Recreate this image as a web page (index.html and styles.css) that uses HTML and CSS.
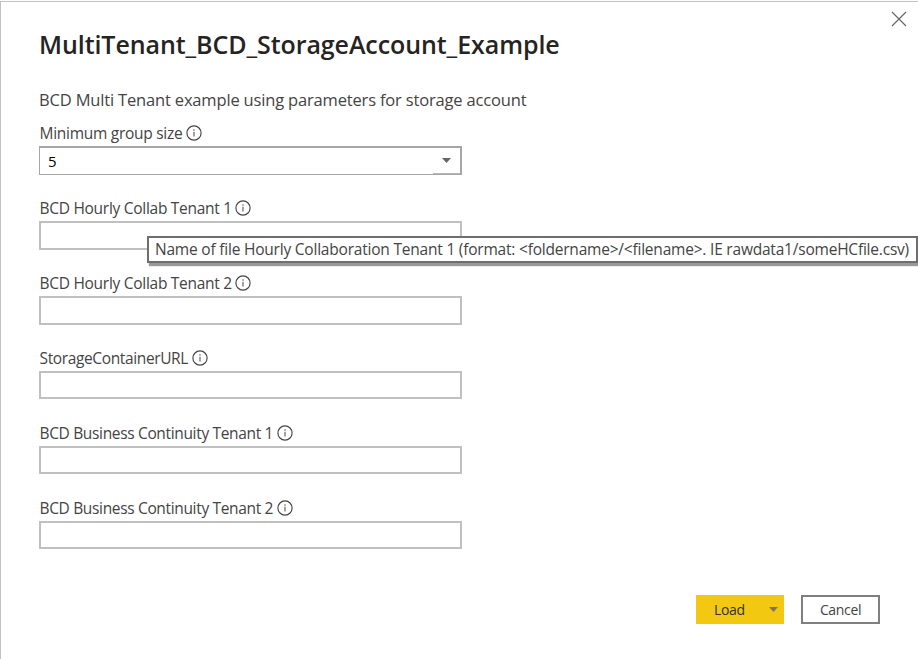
FILE: index.html
```
<!DOCTYPE html>
<html lang="en">
<head>
<meta charset="utf-8">
<title>MultiTenant_BCD_StorageAccount_Example</title>
<link rel="stylesheet" href="styles.css">
</head>
<body>
<svg class="defs" width="0" height="0">
  <symbol id="info" viewBox="0 0 16 16">
    <circle cx="8" cy="8" r="7.1" fill="none" stroke="#444" stroke-width="1.15"/>
    <path d="M8 6.8v4.6M8 4.3v1.4" fill="none" stroke="#666" stroke-width="1.2"/>
  </symbol>
</svg>
<main class="dialog">
  <button class="close" aria-label="Close"><svg width="16" height="16" viewBox="0 0 16 16"><path d="M1 1l14 14M15 1L1 15" stroke="#666" stroke-width="1.2"/></svg></button>
  <h1 class="title">MultiTenant_BCD_StorageAccount_Example</h1>
  <p class="description">BCD Multi Tenant example using parameters for storage account</p>
  <form class="fields">
    <div class="field">
      <div class="label"><span class="t-size">Minimum group size</span><svg class="info"><use href="#info"/></svg></div>
      <div class="control select"><span>5</span><div class="arrow-box"><svg class="arrow" width="9" height="5" viewBox="0 0 9 5"><path d="M0 0h9L4.5 5z" fill="#666"/></svg></div></div>
    </div>
    <div class="field">
      <div class="label"><span class="t-hourly">BCD Hourly Collab Tenant 1</span><svg class="info"><use href="#info"/></svg></div>
      <div class="control"></div>
      <div class="tooltip"><span class="t-tip">Name of file Hourly Collaboration Tenant 1 (format: &lt;foldername&gt;/&lt;filename&gt;. IE rawdata1/someHCfile.csv)</span></div>
    </div>
    <div class="field">
      <div class="label"><span class="t-hourly">BCD Hourly Collab Tenant 2</span><svg class="info"><use href="#info"/></svg></div>
      <div class="control"></div>
    </div>
    <div class="field">
      <div class="label"><span class="t-url">StorageContainerURL</span><svg class="info"><use href="#info"/></svg></div>
      <div class="control"></div>
    </div>
    <div class="field">
      <div class="label"><span class="t-business">BCD Business Continuity Tenant 1</span><svg class="info"><use href="#info"/></svg></div>
      <div class="control"></div>
    </div>
    <div class="field">
      <div class="label"><span class="t-business">BCD Business Continuity Tenant 2</span><svg class="info"><use href="#info"/></svg></div>
      <div class="control"></div>
    </div>
  </form>
  <footer class="actions">
    <button class="load"><span>Load</span><svg class="arrow" width="9" height="5" viewBox="0 0 9 5"><path d="M0 0h9L4.5 5z" fill="#7d7360"/></svg></button>
    <button class="cancel">Cancel</button>
  </footer>
</main>
</body>
</html>
```
FILE: styles.css
```
* { box-sizing: border-box; }
body { margin: 0; background: #fff; font-family: "Open Sans", "Noto Sans", sans-serif; color: #444; overflow: hidden; }
button { font: inherit; letter-spacing: inherit; margin: 0; padding: 0; border: 0; background: none; color: inherit; }
.defs { position: absolute; }
.dialog { position: relative; display: flex; flex-direction: column; height: 658px; margin-top: 1px; padding: 25px 38px 0; border-top: 1px solid #c5c2c1; border-left: 1px solid #c5c2c1; }
.close { position: absolute; top: 9px; right: 11px; width: 16px; height: 16px; }
.close svg { display: block; }
.title { margin: 0; height: 34px; line-height: 34px; font-size: 25px; font-weight: 600; letter-spacing: -0.08px; color: #252423; white-space: nowrap; align-self: flex-start; }
.description { margin: 28px 0 0; height: 22px; line-height: 22px; font-size: 16.5px; letter-spacing: -0.17px; white-space: nowrap; align-self: flex-start; }
.fields { display: grid; grid-auto-rows: 51px; row-gap: 23.9px; width: 423px; margin-top: 12.3px; }
.field { position: relative; }
.label { display: flex; align-items: center; gap: 3.5px; height: 20px; margin: 0 0 3px 0.5px; font-size: 15.5px; line-height: 20px; white-space: nowrap; }
.t-size { letter-spacing: -0.28px; }
.t-hourly { letter-spacing: -0.28px; }
.t-url { letter-spacing: -0.37px; }
.t-business { letter-spacing: -0.34px; }
.t-tip { letter-spacing: -0.21px; }
.info { width: 16px; height: 16px; flex: none; }
.control { height: 28.5px; border: 2px solid #c1c0c0; background: #fff; }
.select { display: flex; justify-content: space-between; border: 1px solid #a6a6a6; border-top-width: 2px; border-right-width: 2px; height: 28.5px; padding-left: 8px; font-size: 15px; line-height: 26px; color: #000; }
.arrow-box { display: flex; justify-content: center; align-items: center; width: 27px; border-bottom: 1px solid #b8b8b8; }
.tooltip { position: absolute; left: 108px; top: 37.7px; height: 27px; width: 771px; padding-left: 6px; border: 2px solid #6e6e6e; background: #fff; box-shadow: 2px 3px 1px #999; font-size: 15.5px; line-height: 22px; white-space: nowrap; z-index: 1; }
.actions { display: flex; gap: 17px; margin: 46.2px 0 0 auto; font-size: 14px; letter-spacing: -0.35px; }
.load { display: flex; align-items: center; gap: 24px; width: 88px; height: 29px; padding-left: 18px; background: #f2c811; color: #333; }
.cancel { width: 79px; height: 29px; border: 2px solid #7f7f7f; }
```
